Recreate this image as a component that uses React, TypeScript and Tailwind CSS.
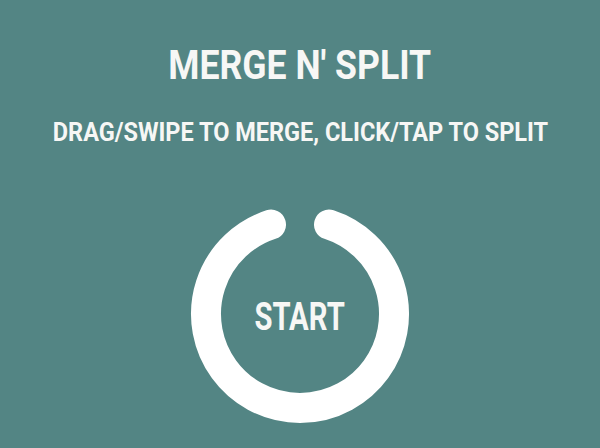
export default function App() {
  const r = 94
  const a = Math.asin(29 / r)
  const sx = 110 - r * Math.sin(a)
  const ex = 110 + r * Math.sin(a)
  const y = 110 - r * Math.cos(a)
  return (
    <div
      className="flex h-[448px] w-[600px] flex-col items-center bg-[#538584] text-[#f7f7f5]"
      style={{ fontFamily: 'Roboto, "Liberation Sans", sans-serif' }}
    >
      <h1 className="mt-[42px] scale-x-[0.89] text-[40px] font-bold leading-[48px] whitespace-nowrap">MERGE N' SPLIT</h1>
      <p className="mt-[28px] scale-x-[0.94] text-[25px] font-bold leading-[30px] whitespace-nowrap">
        DRAG/SWIPE TO MERGE, CLICK/TAP TO SPLIT
      </p>
      <button className="relative mt-[56px] flex h-[220px] w-[220px] items-center justify-center">
        <svg className="absolute inset-0" width="220" height="220" viewBox="0 0 220 220">
          <path
            d={`M ${ex} ${y} A ${r} ${r} 0 1 1 ${sx} ${y}`}
            fill="none"
            stroke="#ffffff"
            strokeWidth="30"
            strokeLinecap="round"
          />
        </svg>
        <span className="relative mt-[6px] scale-x-[0.77] text-[38px] font-bold leading-none">START</span>
      </button>
    </div>
  )
}
